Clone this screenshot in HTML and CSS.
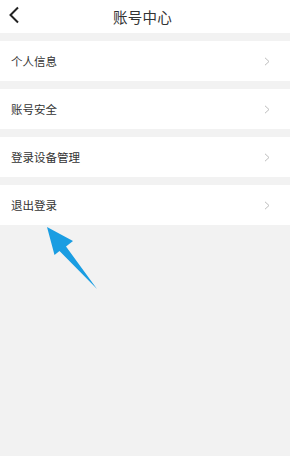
FILE: index.html
```html
<!DOCTYPE html>
<html lang="zh-CN">
<head>
    <meta charset="UTF-8">
    <meta name="viewport" content="width=device-width, initial-scale=1.0">
    <title>账号中心</title>
    <link rel="stylesheet" href="styles.css">
</head>
<body>
    <div class="page">
        <header class="top-bar">
            <a href="#" class="back-btn">
                <svg width="12" height="18" viewBox="0 0 12 18">
                    <path d="M10 1.5 L2.5 9 L10 16.5" fill="none" stroke="#222" stroke-width="2" stroke-linejoin="miter"/>
                </svg>
            </a>
            <h1 class="title">账号中心</h1>
        </header>

        <ul class="menu">
            <li class="menu-item">
                <span>个人信息</span>
                <svg class="chevron" width="6" height="9" viewBox="0 0 6 9"><path d="M1 0.8 L5 4.5 L1 8.2" fill="none" stroke="#bdbdbd" stroke-width="1"/></svg>
            </li>
            <li class="menu-item">
                <span>账号安全</span>
                <svg class="chevron" width="6" height="9" viewBox="0 0 6 9"><path d="M1 0.8 L5 4.5 L1 8.2" fill="none" stroke="#bdbdbd" stroke-width="1"/></svg>
            </li>
            <li class="menu-item">
                <span>登录设备管理</span>
                <svg class="chevron" width="6" height="9" viewBox="0 0 6 9"><path d="M1 0.8 L5 4.5 L1 8.2" fill="none" stroke="#bdbdbd" stroke-width="1"/></svg>
            </li>
            <li class="menu-item">
                <span>退出登录</span>
                <svg class="chevron" width="6" height="9" viewBox="0 0 6 9"><path d="M1 0.8 L5 4.5 L1 8.2" fill="none" stroke="#bdbdbd" stroke-width="1"/></svg>
            </li>
        </ul>

        <svg class="pointer" width="300" height="459" viewBox="0 0 300 459">
            <polygon points="47,227 73,241 66,246.5 97,289 59.5,251 54.5,255" fill="#1a9de2"/>
        </svg>
    </div>
</body>
</html>
```

FILE: styles.css
```css
* {
    margin: 0;
    padding: 0;
    box-sizing: border-box;
}

body {
    font-family: "Noto Sans CJK SC", "Noto Sans", sans-serif;
    background: #fff;
    color: #333;
    width: 300px;
    height: 459px;
    overflow: hidden;
}

.page {
    width: 290px;
    height: 456px;
    background: #f2f2f2;
}

.top-bar {
    height: 33px;
    background: #fff;
    display: flex;
    align-items: center;
    justify-content: center;
    position: relative;
}

.back-btn {
    position: absolute;
    left: 8px;
    top: 6px;
    display: block;
    line-height: 0;
}

.title {
    font-size: 14.5px;
    font-weight: 400;
    color: #333;
    margin-left: -5px;
    letter-spacing: 0.3px;
}

.menu {
    list-style: none;
    padding-top: 8px;
    display: flex;
    flex-direction: column;
    gap: 8px;
}

.menu-item {
    height: 40px;
    background: #fff;
    display: flex;
    align-items: center;
    justify-content: space-between;
    padding: 0 20px 0 11px;
    font-size: 11.5px;
    color: #333;
}

.chevron {
    display: block;
}

.pointer {
    position: absolute;
    left: 0;
    top: 0;
    pointer-events: none;
}
```
